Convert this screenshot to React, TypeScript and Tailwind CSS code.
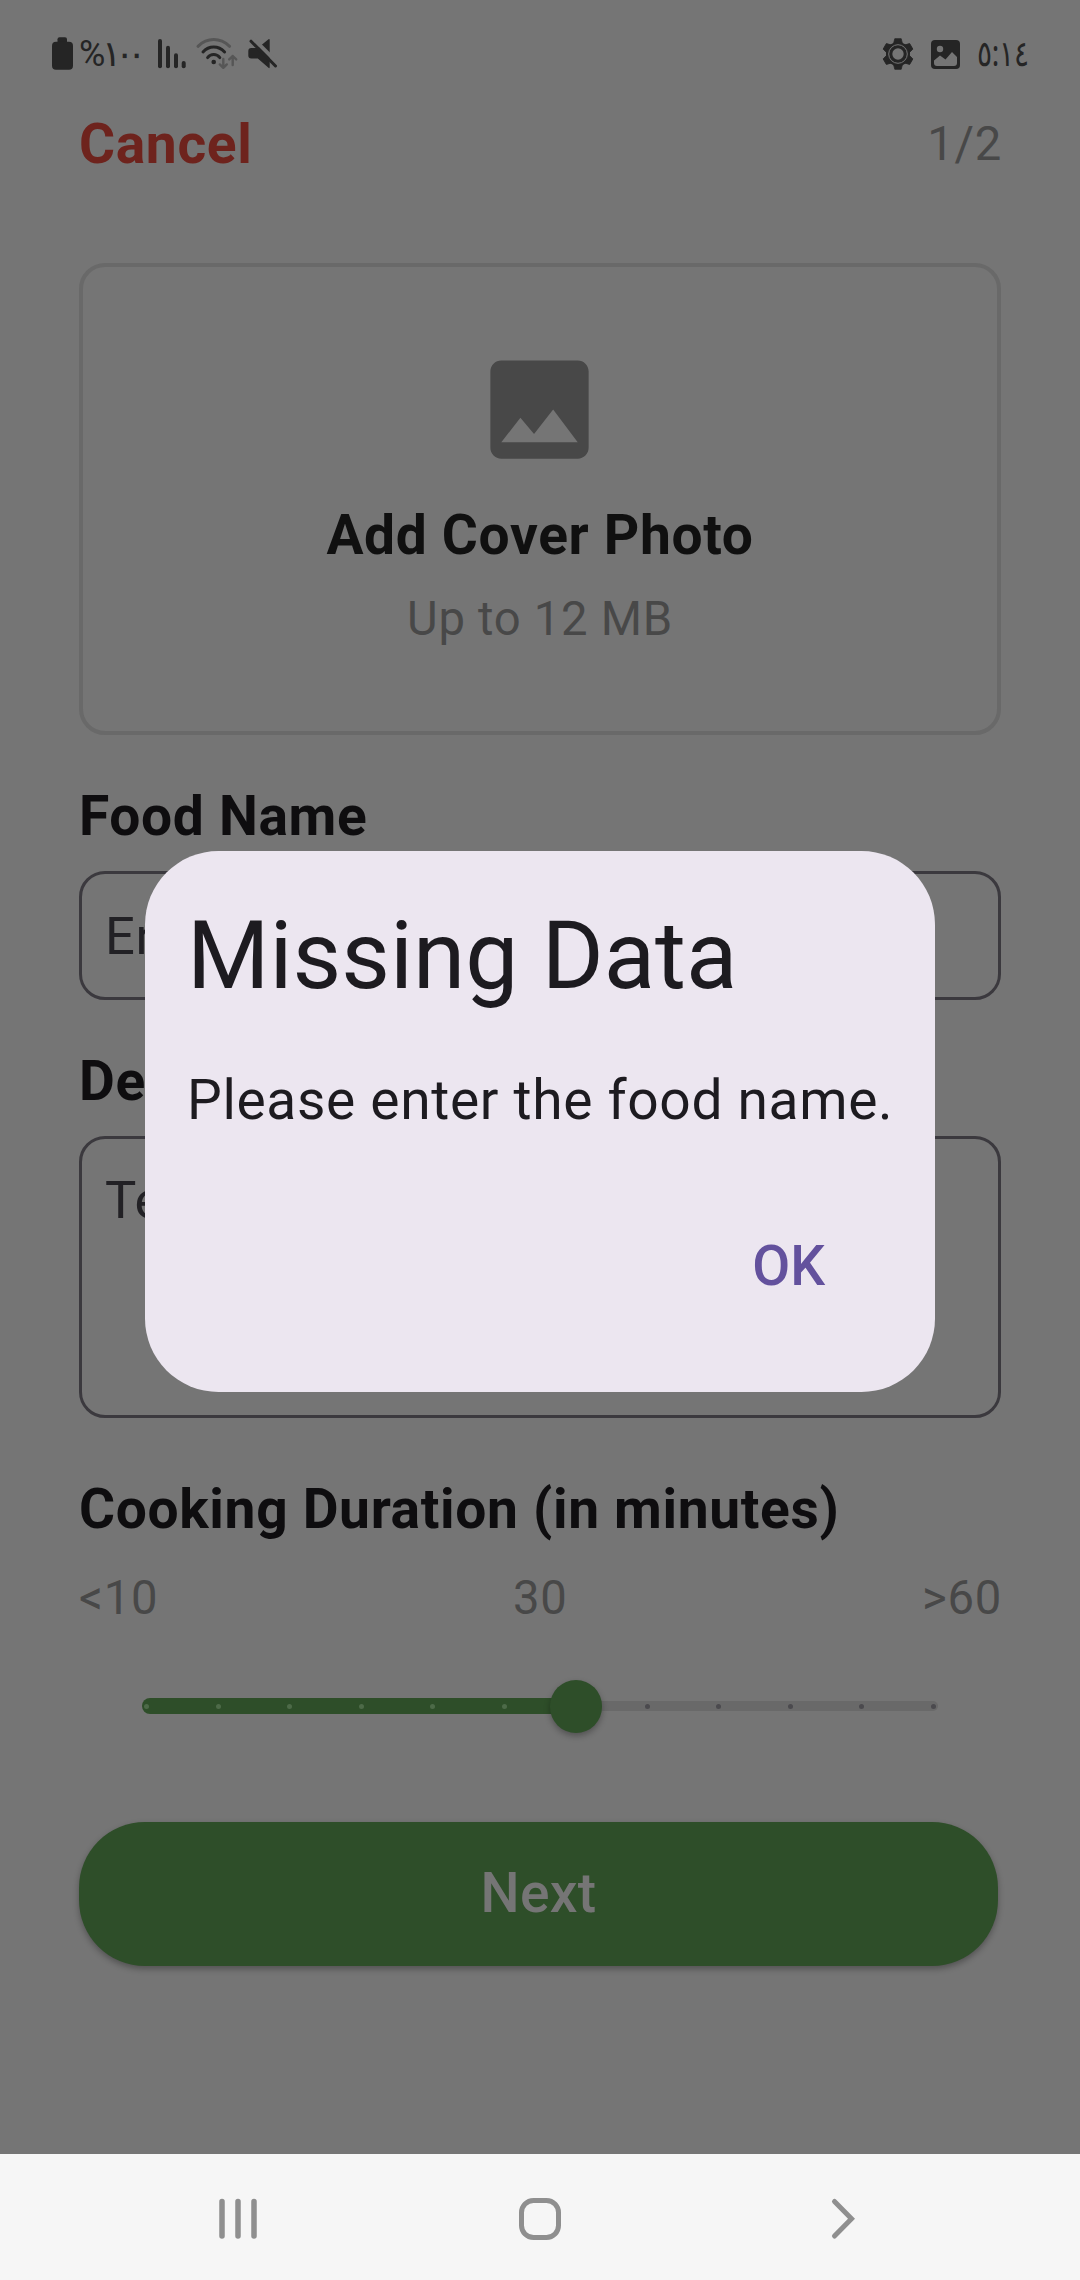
import React from "react";

const activeTicks = [0, 1, 2, 3, 4, 5];
const inactiveTicks = [0, 1, 2, 3, 4];
const gearTeeth = [0, 60, 120, 180, 240, 300];

function StatusBar() {
  return (
    <div className="flex h-[108px] items-center justify-between pr-[51px] pl-[51px] text-[#252525]">
      <div className="flex items-center">
        <svg width="23" height="36" viewBox="51 36 23 36" fill="currentColor">
          <rect x="57.5" y="37.3" width="9.5" height="8" rx="2" />
          <rect x="52" y="41.7" width="21" height="28" rx="4" />
        </svg>
        <div className="ml-[5px] flex h-[36px] w-[63px] items-center whitespace-nowrap">
          <span className="w-[29px] font-['Roboto'] text-[36px] leading-[36px]">%</span>
          <span className="-mt-[3px] flex font-['Noto_Sans',sans-serif] text-[36px] leading-[36px]">
            <span className="flex w-[13px] justify-center">١</span>
            <span className="flex w-[12px] justify-center">٠</span>
            <span className="flex w-[12px] justify-center">٠</span>
          </span>
        </div>
        <svg className="ml-[14px]" width="32" height="36" viewBox="156 36 32 36" fill="currentColor">
          <rect x="158" y="39" width="4" height="29.3" rx="2" />
          <rect x="166" y="45.7" width="4" height="22.6" rx="2" />
          <rect x="174" y="53.3" width="4" height="15" rx="2" />
          <rect x="181.7" y="61" width="4" height="7.3" rx="2" />
        </svg>
        <svg className="ml-[7px]" width="44" height="36" viewBox="195 36 44 36" fill="none" strokeWidth="3" strokeLinecap="round" strokeLinejoin="round">
          <path d="M198 46.3Q205 39.6 213.7 39.6T229.6 46.3" stroke="#565656" />
          <path d="M203 52Q207.5 47 213.7 47T224.6 52" stroke="currentColor" />
          <path d="M207.6 57.6Q210 54.6 213.7 54.6T219.8 57.6" stroke="currentColor" />
          <circle cx="213.7" cy="62" r="2.3" fill="currentColor" />
          <path d="M223.3 59V67.6M219.8 64.4l3.5 3.4 3.5-3.4M232.7 65V56M229.2 59.4l3.5-3.4 3.5 3.4" stroke="#565656" strokeWidth="2.4" />
        </svg>
        <svg className="ml-[7px]" width="34" height="36" viewBox="246 36 34 36">
          <path d="M248.3 51q0-3 3-3h6.5L268.5 39.3q1.2-.8 1.2.8V67q0 1.800-1.200.8L257.800 58.600h-6.500q-3 0-3-3z" fill="currentColor" />
          <path d="M253 38.300L278.500 63.800" stroke="#757575" strokeWidth="4" />
          <path d="M251 41.200L275.500 66" stroke="currentColor" strokeWidth="3" strokeLinecap="round" />
        </svg>
      </div>
      <div className="flex items-center">
        <svg width="32" height="36" viewBox="-16 -18 32 36" fill="currentColor">
          {gearTeeth.map((deg) => (
            <path key={deg} d="M-4.800-9L-3.200-15.300H3.200L4.800-9z" transform={`rotate(${deg})`} stroke="currentColor" strokeWidth="0.800" strokeLinejoin="round" />
          ))}
          <circle r="12" />
          <circle r="9.300" fill="none" stroke="#757575" strokeWidth="1" />
          <circle r="5.700" fill="#757575" />
        </svg>
        <svg className="ml-[16px]" width="31" height="36" viewBox="930 36 31 36">
          <rect x="931" y="40" width="29" height="29" rx="4" fill="currentColor" />
          <circle cx="940" cy="49" r="3.200" fill="#757575" />
          <path d="M934 60.500L940 55.500L945.500 59.500L952 52L957 57V63q0 3-3 3H937q-3 0-3-3z" fill="#757575" />
        </svg>
        <span dir="ltr" className="-mt-[2px] ml-[16px] w-[52px] origin-left scale-x-[0.78] font-['Noto_Sans',sans-serif] text-[36px] leading-[36px] whitespace-nowrap">
          ٥:١٤
        </span>
      </div>
    </div>
  );
}

function SectionTitle({ children }: { children: React.ReactNode }) {
  return <h2 className="h-[64px] text-[55.125px] leading-[64px] font-bold tracking-[0.66px] text-[#0e0d0f]">{children}</h2>;
}

function Slider() {
  return (
    <div className="relative mt-[54px] flex h-[52px] items-center pr-[63px] pl-[63px]">
      <div className="flex h-[16px] w-[434px] items-center justify-between rounded-l-full bg-[#2e4e29] pr-[69px] pl-[2px]">
        {activeTicks.map((i) => (
          <span key={i} className="size-[5px] rounded-full bg-[#4d6a48]" />
        ))}
      </div>
      <div className="flex h-[10px] flex-1 items-center justify-between rounded-r-full bg-[#696969] pr-[2.500px] pl-[69px]">
        {inactiveTicks.map((i) => (
          <span key={i} className="size-[5px] rounded-full bg-[#4b4a4e]" />
        ))}
      </div>
      <div className="absolute top-0 left-[470.5px] size-[52.5px] rounded-full bg-[#2e4e29] shadow-[0_3px_6px_rgba(0,0,0,0.3)]" />
    </div>
  );
}

function Dialog() {
  return (
    <div className="absolute inset-x-0 top-0 flex justify-center pt-[851px]">
      <div className="flex h-[541px] w-[790px] flex-col rounded-[73.5px] bg-[#ece6f0] px-[42px] pt-[50px] whitespace-nowrap text-[#1d1b20]">
        <h1 className="h-[110px] text-[94.5px] leading-[110px]">Missing Data</h1>
        <p className="mt-[57px] h-[64px] text-[55.125px] leading-[64px] tracking-[0.66px]">Please enter the food name.</p>
        <button className="mt-[102px] mr-[68px] h-[64px] self-end text-[55.125px] leading-[64px] font-medium text-[#63519d]">OK</button>
      </div>
    </div>
  );
}

function NavigationBar() {
  return (
    <div className="flex h-[126px] items-center bg-[#f6f6f6] pt-[4px] pl-[217px]">
      <svg width="42" height="44" viewBox="0 0 42 44" stroke="#8f8f8f" strokeWidth="5.500" strokeLinecap="round">
        <path d="M5 4.500V39M21 4.500V39M37 4.500V39" />
      </svg>
      <svg className="ml-[259px]" width="44" height="44" viewBox="0 0 44 44" fill="none" stroke="#8f8f8f" strokeWidth="5">
        <rect x="3.500" y="3.500" width="37" height="37" rx="12" />
      </svg>
      <svg className="ml-[267px]" width="28" height="44" viewBox="0 0 28 44" fill="none" stroke="#8f8f8f" strokeWidth="5" strokeLinecap="round">
        <path d="M5.500 4.500L22.500 21.700L5.500 39" />
      </svg>
    </div>
  );
}

export default function App() {
  return (
    <div className="relative flex h-[2280px] w-[1080px] flex-col overflow-hidden bg-[#757575] font-['Roboto',sans-serif]">
      <StatusBar />
      <main className="flex flex-1 flex-col px-[79px]">
        <header className="flex h-[72px] items-center justify-between">
          <span className="text-[55.125px] leading-[72px] font-bold tracking-[0.66px] text-[#6e231d]">Cancel</span>
          <span className="-mr-[1px] text-[47.25px] leading-[72px] tracking-[0.7px] text-[#484848]">1/2</span>
        </header>

        <section className="mt-[83px] flex h-[472px] flex-col items-center rounded-[26px] border-4 border-[#696969] pt-[77px]">
          <svg className="mr-[1px]" width="131" height="131" viewBox="0 0 24 24" fill="#484848">
            <path d="M21 19V5c0-1.100-.9-2-2-2H5c-1.100 0-2 .9-2 2v14c0 1.100.9 2 2 2h14c1.100 0 2-.9 2-2zM8.500 13.500l2.500 3.010L14.500 12l4.500 6H5l3.500-4.500z" />
          </svg>
          <p className="mt-[28px] h-[64px] text-[55.125px] leading-[64px] font-bold tracking-[0.66px] text-[#101010]">Add Cover Photo</p>
          <p className="mt-[24px] h-[56px] text-[47.25px] leading-[56px] tracking-[0.7px] text-[#484848]">Up to 12 MB</p>
        </section>

        <div className="mt-[49px]">
          <SectionTitle>Food Name</SectionTitle>
        </div>
        <div className="mt-[23px] flex h-[129px] items-center rounded-[26px] border-[3px] border-[#3b393e] pl-[23px] text-[52.5px] leading-[60px] tracking-[0.66px] text-[#222125]">
          Enter food name
        </div>

        <div className="mt-[49px]">
          <SectionTitle>Description</SectionTitle>
        </div>
        <div className="mt-[23px] h-[282px] rounded-[26px] border-[3px] border-[#3b393e] pt-[31px] pl-[23px] text-[52.5px] leading-[60px] tracking-[0.66px] text-[#222125]">
          Tell a little about your food
        </div>

        <div className="mt-[59px]">
          <SectionTitle>Cooking Duration (in minutes)</SectionTitle>
        </div>
        <div className="-mr-[1px] mt-[29px] flex h-[56px] justify-between text-[47.25px] leading-[56px] tracking-[0.7px] text-[#484848]">
          <span>&lt;10</span>
          <span>30</span>
          <span>&gt;60</span>
        </div>
        <Slider />

        <button className="mt-[90px] h-[144px] w-[919px] rounded-[66px] bg-[#2e4e29] pb-[2px] text-[55.125px] leading-[64px] font-medium tracking-[0.3px] text-[#757575] shadow-[0_3px_6px_rgba(0,0,0,0.3)]">
          Next
        </button>
      </main>
      <NavigationBar />
      <Dialog />
    </div>
  );
}
